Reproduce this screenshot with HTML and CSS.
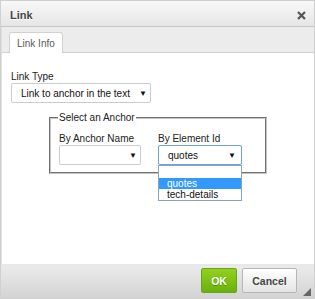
FILE: index.html
```html
<!DOCTYPE html>
<html lang="en">
<head>
<meta charset="UTF-8">
<title>Link</title>
<link rel="stylesheet" href="styles.css">
</head>
<body>

<div class="dialog">
    <div class="title">
        <span>Link</span>
        <svg class="close" width="9" height="9" viewBox="0 0 9 9"><path d="M1 1 L8 8 M8 1 L1 8" stroke="#555" stroke-width="2.2"/></svg>
    </div>
    <div class="tabs">
        <div class="tab">Link Info</div>
    </div>
    <div class="content">
        <label class="label">Link Type</label>
        <div class="select wide">
            <span>Link to anchor in the text</span>
            <span class="arrow">&#9660;</span>
        </div>

        <fieldset class="anchor">
            <legend>Select an Anchor</legend>
            <div class="col">
                <label class="label">By Anchor Name</label>
                <div class="select small left">
                    <span></span>
                    <span class="arrow">&#9660;</span>
                </div>
            </div>
            <div class="col">
                <label class="label">By Element Id</label>
                <div class="select small focus">
                    <span>quotes</span>
                    <span class="arrow">&#9660;</span>
                </div>
                <ul class="options">
                    <li>&nbsp;</li>
                    <li class="selected">quotes</li>
                    <li>tech-details</li>
                </ul>
            </div>
        </fieldset>
    </div>
    <div class="footer">
        <button class="btn ok">OK</button>
        <button class="btn cancel">Cancel</button>
        <div class="grip"></div>
    </div>
</div>

</body>
</html>
```

FILE: styles.css
```css
body {
    margin: 0;
    padding: 0;
    font-family: "Liberation Sans", Arial, sans-serif;
    font-size: 10px;
    color: #333;
}
.dialog {
    width: 313px;
    height: 297px;
    border: 1px solid #d0d0d0;
    display: flex;
    flex-direction: column;
    background: #fff;
}
.title {
    box-sizing: border-box;
    height: 26px;
    padding: 3px 8px 0 9px;
    border-bottom: 1px solid #c5c5c5;
    background: linear-gradient(#f8f8f8, #e6e6e6);
    display: flex;
    align-items: center;
    justify-content: space-between;
    font-size: 11px;
    font-weight: bold;
    color: #474747;
    text-shadow: 0 1px 0 #fff;
}
.tabs {
    height: 25px;
    background: #ececec;
    border-bottom: 1px solid #d1d1d1;
    border-left: 1px solid #e0e0e0;
    display: flex;
    align-items: flex-end;
    padding-left: 7px;
}
.tab {
    height: 20px;
    line-height: 21px;
    padding: 0 7px;
    background: #fff;
    border: 1px solid #d1d1d1;
    border-bottom: none;
    border-radius: 3px 3px 0 0;
    margin-bottom: -1px;
    color: #595959;
}
.content {
    flex: 1;
    position: relative;
    padding: 18px 0 0 9px;
    border-left: 1px solid #e0e0e0;
}
.label {
    display: block;
    line-height: 12px;
    color: #222;
    white-space: nowrap;
}
.select {
    box-sizing: border-box;
    height: 20px;
    border: 1px solid #c9cccf;
    border-radius: 2px;
    background: #fff;
    display: flex;
    align-items: center;
    justify-content: space-between;
    color: #111;
    white-space: nowrap;
}
.select.wide {
    width: 140px;
    padding: 0 3px 0 9px;
}
.select.small {
    width: 84px;
    padding: 0 5px 0 9px;
}
.select.left {
    width: 82px;
    padding-right: 3px;
}
.select.focus {
    border-color: #6fa3dc;
}
.arrow {
    font-size: 8px;
    color: #111;
}
.anchor {
    margin: 9px 0 0 38px;
    width: 198px;
    padding: 9px 8px 7px 8px;
    border: 2px groove #c4c4c4;
    display: flex;
    gap: 17px;
}
.anchor legend {
    padding: 0 1px;
    margin-left: -1px;
    line-height: 12px;
    color: #222;
}
.col {
    position: relative;
}
.options {
    position: absolute;
    top: 32px;
    left: 0;
    width: 82px;
    margin: 0;
    padding: 0;
    list-style: none;
    border: 1px solid #8aa2bd;
    background: #fff;
    z-index: 2;
}
.options li {
    height: 11px;
    line-height: 11px;
    padding-left: 8px;
    color: #111;
}
.options li:first-child {
    height: 12px;
}
.options li.selected {
    background: #3399ff;
    color: #fff;
}
.footer {
    box-sizing: border-box;
    height: 34px;
    border-top: 2px solid #e8e8e8;
    background: linear-gradient(#ebebeb, #d2d3d2);
    display: flex;
    align-items: flex-start;
    justify-content: flex-end;
    gap: 5px;
    padding: 2px 17px 0 0;
    position: relative;
}
.btn {
    height: 25px;
    font-family: "Liberation Sans", Arial, sans-serif;
    font-size: 10.5px;
    font-weight: bold;
    border-radius: 2px;
    padding: 0;
}
.ok {
    width: 36px;
    color: #fff;
    background: linear-gradient(#92d21d, #69b10b);
    border: 1px solid #6aa321;
    text-shadow: 0 1px 0 #5a8f10;
}
.cancel {
    width: 55px;
    color: #474747;
    background: linear-gradient(#fff, #e4e4e4);
    border: 1px solid #b6b6b6;
}
.grip {
    position: absolute;
    right: 3px;
    bottom: 2px;
    width: 0;
    height: 0;
    border-left: 8px solid transparent;
    border-bottom: 8px solid #666;
}
```
